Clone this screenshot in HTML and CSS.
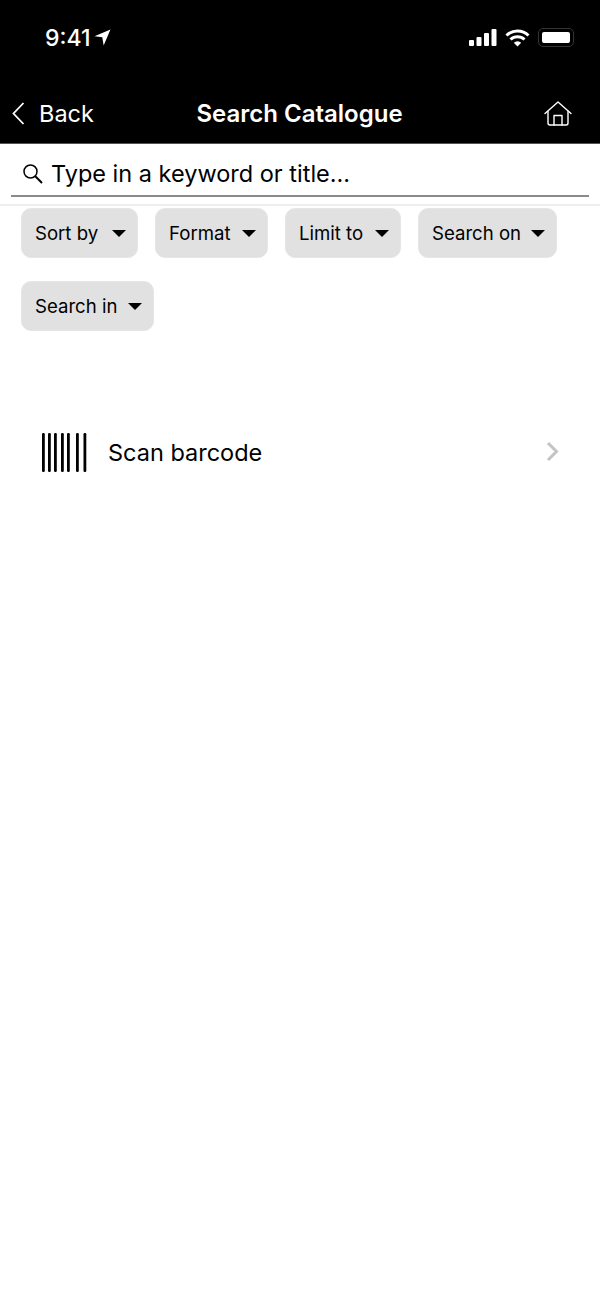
FILE: index.html
```html
<!DOCTYPE html>
<html>
<head>
    <meta charset="UTF-8">
    <title>Search Catalogue</title>
    <link rel="stylesheet" href="styles.css">
</head>
<body>
<div class="top">
    <div class="status">
        <div class="clock">
            <span>9:41</span>
            <svg width="17" height="17" viewBox="0 0 16 16"><path d="M15.500 .5 .5 6.800l7.300.9 1.300 7.800z" fill="#fff"/></svg>
        </div>
        <div class="status-icons">
            <svg width="28" height="17" viewBox="0 0 28 17" fill="#fff">
                <rect x="0" y="11" width="5" height="6" rx="1"/>
                <rect x="7.500" y="8" width="5" height="9" rx="1"/>
                <rect x="15" y="4" width="5" height="13" rx="1"/>
                <rect x="22.500" y="0" width="5" height="17" rx="1"/>
            </svg>
            <svg width="25" height="18" viewBox="0 0 25 18" fill="none" stroke="#fff" stroke-width="3">
                <path d="M1.500 6.500a15.500 15.500 0 0 1 22 0"/>
                <path d="M5.500 10.500a10 10 0 0 1 14 0"/>
                <path d="M12.500 17.500 8.800 13.700a5.200 5.200 0 0 1 7.400 0z" fill="#fff" stroke="none"/>
            </svg>
            <div class="battery"><div class="battery-level"></div></div>
        </div>
    </div>
    <div class="nav">
        <div class="back">
            <svg width="13" height="23" viewBox="0 0 13 23" fill="none" stroke="#fff" stroke-width="1.800"><path d="M11.500 1 1.500 11.500 11.500 22"/></svg>
            <span>Back</span>
        </div>
        <div class="title">Search Catalogue</div>
        <svg class="home" width="28" height="25" viewBox="0 0 28 25" fill="none" stroke="#fff" stroke-width="1.400" stroke-linejoin="round" stroke-linecap="round">
            <path d="M1 12.500 14 1l13 11.500"/>
            <path d="M4 10.500v11.500a2 2 0 0 0 2 2h16a2 2 0 0 0 2-2V10.500"/>
            <path d="M10 24v-9.500h8V24"/>
        </svg>
    </div>
</div>

<div class="search">
    <div class="search-field">
        <svg width="22" height="22" viewBox="0 0 22 22" fill="none" stroke="#000" stroke-width="1.500"><circle cx="8.500" cy="8.500" r="6.500"/><path d="m13.300 13.300 6.700 6.700" stroke-width="2"/></svg>
        <span>Type in a keyword or title...</span>
    </div>
</div>

<div class="filters">
    <div class="chip chip-sort"><span>Sort by</span><i class="caret"></i></div>
    <div class="chip chip-format"><span>Format</span><i class="caret"></i></div>
    <div class="chip chip-limit"><span>Limit to</span><i class="caret"></i></div>
    <div class="chip chip-on"><span>Search on</span><i class="caret"></i></div>
    <div class="chip chip-in"><span>Search in</span><i class="caret"></i></div>
</div>

<div class="scan">
    <svg width="45" height="39" viewBox="0 0 45 39" fill="#000">
        <rect x="0" y="0" width="2.800" height="39" rx="1.200"/>
        <rect x="6" y="0" width="2.800" height="39" rx="1.200"/>
        <rect x="12" y="0" width="2.800" height="39" rx="1.200"/>
        <rect x="19" y="0" width="2.800" height="39" rx="1.200"/>
        <rect x="25" y="0" width="2.800" height="39" rx="1.200"/>
        <rect x="34" y="0" width="2.800" height="39" rx="1.200"/>
        <rect x="41.500" y="0" width="2.800" height="39" rx="1.200"/>
    </svg>
    <span class="scan-label">Scan barcode</span>
    <svg class="scan-arrow" width="13" height="21" viewBox="0 0 13 21" fill="none" stroke="#c4c4c4" stroke-width="3"><path d="m2 2 8.500 8.500L2 19"/></svg>
</div>
</body>
</html>
```

FILE: styles.css
```css
* {
    margin: 0;
    padding: 0;
    box-sizing: border-box;
}

html, body {
    width: 100%;
    height: 100%;
    overflow: hidden;
}

body {
    background: #fff;
    color: #000;
    font-family: Inter, "Liberation Sans", sans-serif;
}

.top {
    height: 144px;
    background: #000;
    color: #fff;
    border-bottom: 1px solid #555;
}

.status {
    display: flex;
    justify-content: space-between;
    align-items: center;
    height: 75px;
    padding: 0 26px 0 45px;
}

.clock {
    display: flex;
    align-items: center;
    gap: 3px;
    font-size: 23px;
    font-weight: 500;
}

.status-icons {
    display: flex;
    align-items: center;
    gap: 8px;
}

.battery {
    width: 36px;
    height: 19px;
    padding: 3px;
    border: 1px solid #333;
    border-radius: 5px;
}

.battery-level {
    height: 100%;
    background: #fff;
    border-radius: 2px;
}

.nav {
    display: flex;
    align-items: center;
    justify-content: space-between;
    height: 68px;
    padding: 8px 28px 0 12px;
    position: relative;
}

.back {
    display: flex;
    align-items: center;
    gap: 14px;
    font-size: 23.500px;
}

.title {
    position: absolute;
    left: 0;
    right: 1px;
    top: 24px;
    text-align: center;
    font-size: 24px;
    font-weight: 600;
    line-height: 30px;
}

.search {
    height: 62px;
    padding: 0 11px;
    border-bottom: 2px solid #eee;
}

.search-field {
    display: flex;
    align-items: center;
    gap: 7px;
    height: 53px;
    padding: 8px 0 0 11px;
    border-bottom: 2px solid #8a8a8a;
    font-size: 23.500px;
}

.filters {
    display: flex;
    flex-wrap: wrap;
    gap: 23px 17px;
    padding: 2px 0 0 21px;
}

.chip {
    display: flex;
    align-items: center;
    justify-content: space-between;
    height: 50px;
    padding: 0 11px 0 13px;
    background: #e1e1e1;
    border: 1px solid #e6e6e6;
    border-radius: 10px;
    font-size: 18.600px;
}

.chip-sort { width: 117px; }
.chip-format { width: 113px; }
.chip-limit { width: 116px; }
.chip-on { width: 139px; }
.chip-in { width: 133px; }

.caret {
    width: 0;
    height: 0;
    border-left: 7px solid transparent;
    border-right: 7px solid transparent;
    border-top: 7px solid #000;
}

.scan {
    display: flex;
    align-items: center;
    margin-top: 102px;
    padding: 0 41px 0 42px;
}

.scan-label {
    flex: 1;
    margin-left: 21px;
    font-size: 23.500px;
}

.scan-arrow {
    margin-top: -2px;
}
```
